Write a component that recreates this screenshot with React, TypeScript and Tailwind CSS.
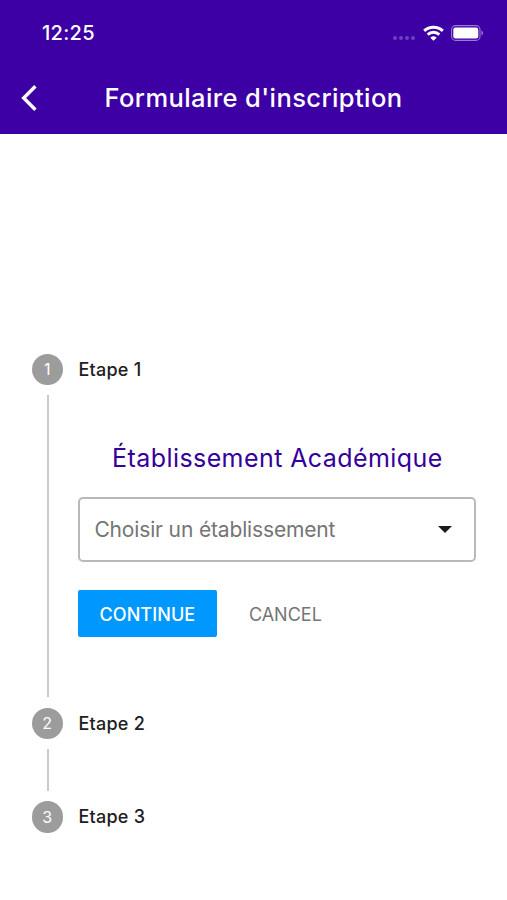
import type { ReactNode } from "react";

function StatusBar() {
  return (
    <div className="flex h-[66px] items-center justify-between pl-[42px] pr-[23px]">
      <span className="text-[20px] font-medium leading-6 tracking-[0.3px]">12:25</span>
      <div className="flex items-center" aria-hidden="true">
        <div className="mr-2 mt-2.5 flex gap-[2px]">
          {[0, 1, 2, 3].map((dot) => (
            <span key={dot} className="size-1 rounded-full bg-[#6d43c0]" />
          ))}
        </div>
        <svg width="21" height="16" viewBox="0 0 21 16" fill="none" stroke="white" strokeWidth="3">
          <path d="M1.2 5.9C6.4.9 14.6.9 19.8 5.9" />
          <path d="M4.7 9.6c3.3-3.1 8.3-3.1 11.6 0" />
          <path d="M10.5 15.8 7.6 13c-.5-.5.9-1.8 2.9-1.8s3.4 1.3 2.9 1.8Z" fill="white" stroke="none" />
        </svg>
        <svg className="ml-[7px]" width="33" height="16" viewBox="0 0 33 16">
          <rect x=".6" y=".6" width="28.4" height="14.8" rx="4" fill="none" stroke="#9a7ad8" strokeWidth="1.1" />
          <rect x="2.3" y="2.5" width="25" height="11" rx="2.2" fill="white" />
          <path d="M30.5 5.5c2 .9 2 4.1 0 5Z" fill="#9a7ad8" />
        </svg>
      </div>
    </div>
  );
}

function AppBar() {
  return (
    <div className="flex h-[68px] items-center pb-1 pl-5">
      <button type="button" aria-label="Retour">
        <svg width="17" height="28" viewBox="0 0 17 28" fill="none" stroke="white" strokeWidth="3.4">
          <path d="M15.4 2.3 3.7 14l11.7 11.7" />
        </svg>
      </button>
      <h1 className="ml-[67.5px] whitespace-nowrap text-[25.5px] font-medium leading-8 tracking-[0.4px]">
        Formulaire d'inscription
      </h1>
    </div>
  );
}

interface StepProps {
  index: number;
  last?: boolean;
  lineClass?: string;
  children?: ReactNode;
}

function Step({ index, last, lineClass, children }: StepProps) {
  return (
    <li className="flex">
      <div className="flex w-[31.5px] shrink-0 flex-col items-center">
        <div className="flex size-[31.5px] items-center justify-center rounded-full bg-[#9c9c9c] text-[16px] leading-none text-white">
          {index}
        </div>
        {!last && <div className={`my-[10.25px] ml-px w-[1.5px] bg-[#cbcbcb] ${lineClass}`} />}
      </div>
      <div className="ml-[15.4px] flex-1">
        <h2 className="text-[18px] font-medium leading-[31.5px] tracking-[0.25px] text-[#202020]">Etape {index}</h2>
        {children}
      </div>
    </li>
  );
}

export default function App() {
  return (
    <div className="min-h-[900px] w-[507px] bg-white font-['Inter',sans-serif]">
      <header className="h-[134px] bg-[#3c00a5] text-white">
        <StatusBar />
        <AppBar />
      </header>

      <ol className="pl-[31.5px] pr-[30.6px] pt-[219.5px]">
        <Step index={1} lineClass="h-[302px]">
          <div className="pt-[57px]">
            <p className="text-center text-[25px] leading-8 tracking-[0.42px] text-[#34009a]">
              Établissement Académique
            </p>
            <button
              type="button"
              className="mt-[23px] flex h-[65px] w-full items-center justify-between rounded-[5px] border-2 border-[#b9b9b9] pl-3.5 pr-[22px]"
            >
              <span className="text-[21px] tracking-[-0.15px] text-[#757575]">Choisir un établissement</span>
              <svg width="14" height="7" viewBox="0 0 14 7" fill="#1c1c1c">
                <path d="M0 0h14L7 7Z" />
              </svg>
            </button>
            <div className="mt-[28.4px] flex">
              <button
                type="button"
                className="h-[47px] w-[139px] rounded-[2px] bg-[#0098ff] pr-px pt-px text-[18px] font-medium tracking-[0.1px] text-white"
              >
                CONTINUE
              </button>
              <button type="button" className="ml-[31.5px] pt-px text-[18px] text-[#757575]">
                CANCEL
              </button>
            </div>
          </div>
        </Step>
        <Step index={2} lineClass="h-[41.5px]" />
        <Step index={3} last />
      </ol>
    </div>
  );
}
